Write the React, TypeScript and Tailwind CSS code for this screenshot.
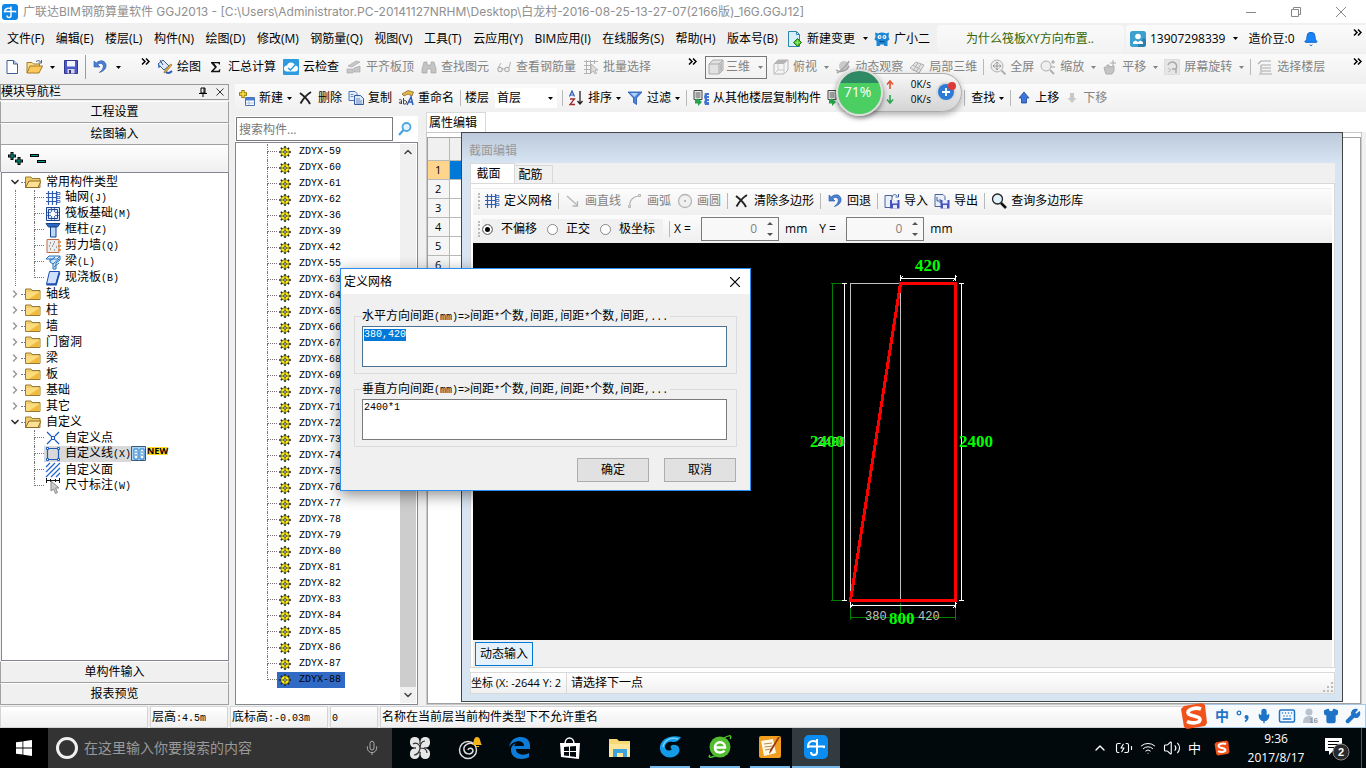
import React, { useEffect, useRef } from 'react';
import { BatteryCharging, Bell, ChevronDown, ChevronRight, ChevronUp, Keyboard, Mic, Shirt, Volume2, Wifi, Wrench } from 'lucide-react';

type IconProps = { children: React.ReactNode; className?: string; box?: string };

const Icon: React.FC<IconProps> = ({ children, className = 'h-4 w-4', box = '0 0 16 16' }) => (
  <svg viewBox={box} className={`${className} shrink-0`} fill="none" aria-hidden="true">
    {children}
  </svg>
);

const icons: Record<string, React.ReactNode> = {
  file: (
    <Icon>
      <path d="M3 1.5h6.5L13.5 5v9.5H3z" fill="#fff" stroke="#3d5f96" />
      <path d="M9.5 1.5V5h4" fill="#b9cdec" stroke="#3d5f96" />
    </Icon>
  ),
  open: (
    <Icon className="h-4 w-[18px]" box="0 0 18 16">
      <path d="M1 14V3.5h5L7.5 5h6v3" fill="#f7df8d" stroke="#a77b26" />
      <path d="M1 14l3-7h12.5L13 14z" fill="#fbc95a" stroke="#a77b26" />
      <path d="M10 2.5c2-1.5 4-1 5 1M15.5 1v3h-3" stroke="#4a6384" />
    </Icon>
  ),
  save: (
    <Icon>
      <path d="M1.5 1.5h13v13h-13z" fill="#4e59c9" stroke="#30368f" />
      <path d="M4 2h8v5.5H4z" fill="#f2f5ff" />
      <path d="M4.5 10h7v4.5h-7z" fill="#d5d8e2" />
      <path d="M6 11h2v3.5H6z" fill="#30368f" />
    </Icon>
  ),
  undo: (
    <Icon>
      <path d="M2 2v6h6L5.8 5.8C8 3.6 11 4.2 11.3 7c.2 2.5-1.5 4.7-4 6.5 4-1 6.8-3.5 6.8-7C14 1.6 8 .2 4.2 4z" fill="#4a7fd6" stroke="#2a55a6" strokeWidth=".6" />
    </Icon>
  ),
  paint: (
    <Icon>
      <path d="M1 5l5-4 6 6-5 4z" fill="#dfe9f7" stroke="#345a92" />
      <path d="M3 1l3 5" stroke="#345a92" />
      <path d="M1.5 5.5C.5 7 1 9 2 9s1-2 1-3" fill="#3f74c7" />
      <path d="M15 6l-6 7-2 1 .5-2L13.5 5z" fill="#e3ae3e" stroke="#8a6214" strokeWidth=".6" />
      <path d="M9 13c2 2 4 1 6-1" stroke="#2c5fb8" strokeWidth="2" />
    </Icon>
  ),
  sigma: (
    <Icon>
      <path d="M3 3h9v2.5h-1c-.3-1-.8-1.2-2-1.2H6L9 8l-3.5 3.8h3.7c1.3 0 1.8-.4 2.2-1.5h1l-.5 3H3v-1L6.8 8.2 3 4z" fill="#111" />
    </Icon>
  ),
  cloud: (
    <Icon>
      <rect width="16" height="16" rx="1" fill="#2d9be0" />
      <path d="M4 12.5a3 3 0 010-6 4.2 4.2 0 018 0 3 3 0 010 6z" fill="#fff" />
      <path d="M5 9l2.5 2L12 6" stroke="#2d9be0" strokeWidth="1.5" />
    </Icon>
  ),
  slab: (
    <Icon>
      <path d="M2 7l8-5 4 1-8 5zM1 10h6v4H1zM8 9l6-2v6H8z" fill="#c6c6c6" stroke="#aaa" strokeWidth=".7" />
    </Icon>
  ),
  binoculars: (
    <Icon>
      <path d="M3 3h3v3h4V3h3l2 7v4h-5v-4H6v4H1v-4z" fill="#c4c4c4" stroke="#a5a5a5" strokeWidth=".7" />
    </Icon>
  ),
  glasses: (
    <Icon>
      <circle cx="4" cy="10.5" r="2.2" stroke="#b0b0b0" strokeWidth="1.2" />
      <circle cx="11" cy="10.5" r="2.2" stroke="#b0b0b0" strokeWidth="1.2" />
      <path d="M6 10h3M2 9l3-5M13 9l1.5-6" stroke="#b0b0b0" />
    </Icon>
  ),
  batch: (
    <Icon>
      <path d="M1 2.5h14M1 6.5h9M1 10.5h7M1 14.5h7M3.5 1v14M7.5 1v14M11.5 1v4" stroke="#b2b2b2" />
      <path d="M8 5l7 6-3 .3 1.5 3-1.5.7-1.5-3L8 14z" fill="#ddd" stroke="#aaa" strokeWidth=".8" />
    </Icon>
  ),
  cube: (
    <Icon>
      <path d="M1 5l4-4h10v10l-4 4H1z" fill="#e2e2e2" stroke="#aaa" />
      <path d="M1 5h10v10M11 5l4-4" stroke="#aaa" />
      <path d="M11.5 5.500l3-3v8l-3 3z" fill="#bbb" />
    </Icon>
  ),
  cubeTop: (
    <Icon>
      <path d="M1 5l4-4h10v10l-4 4H1z" fill="#f5f5f5" stroke="#b5b5b5" />
      <path d="M1 5l4-4h10l-4 4z" fill="#b5b5b5" />
      <path d="M11 5v10M5 5v6h6M5 11l-4 4" stroke="#c8c8c8" />
    </Icon>
  ),
  orbit: (
    <Icon>
      <circle cx="9" cy="7" r="5" fill="#c9c9c9" />
      <path d="M2 14c2-1 10-7 12-12M1 11c4 3 11 1 13-4" stroke="#a2a2a2" strokeWidth="1.5" />
    </Icon>
  ),
  part3d: (
    <Icon>
      <path d="M1 9l6-6 8 3-5 8z" fill="#e4e4e4" stroke="#b0b0b0" />
      <path d="M4 6l8 5M9 4l-5 8M12 5l-5 8" stroke="#b0b0b0" />
    </Icon>
  ),
  full: (
    <Icon>
      <circle cx="7" cy="7" r="6" fill="#eee" stroke="#b0b0b0" />
      <path d="M7 3v8M3 7h8M5.5 4.5L7 3l1.5 1.5M5.5 9.5L7 11l1.5-1.5M4.5 5.5L3 7l1.5 1.5M9.5 5.5L11 7 9.5 8.5" stroke="#999" />
      <path d="M11.5 11.5l4 4" stroke="#b0b0b0" strokeWidth="2" />
    </Icon>
  ),
  zoom: (
    <Icon>
      <circle cx="6" cy="7" r="5" fill="#eee" stroke="#b0b0b0" />
      <path d="M10 11l4 4" stroke="#b0b0b0" strokeWidth="2" />
      <path d="M13 1v4M11 3h4M11 8h4" stroke="#a0a0a0" />
    </Icon>
  ),
  pan: (
    <Icon>
      <path d="M2 9c1-2 2-1 3 0V6h2v2l5-1v5l-2 3H4z" fill="#c4c4c4" stroke="#aeaeae" />
      <path d="M11 1v6M8 4h6" stroke="#aaa" />
    </Icon>
  ),
  rotate: (
    <Icon>
      <path d="M.5.5h15v15H.5z" fill="#e6e6e6" stroke="#ddd" />
      <path d="M4 6a4.5 4.5 0 118 4M12 14v-4H8" stroke="#a8a8a8" strokeWidth="1.5" />
      <path d="M4 9l3 2-3 2" stroke="#bbb" />
    </Icon>
  ),
  floors: (
    <Icon>
      <path d="M1 5l3-3h10M4 6h10M5 9h9M5 12h9M2 15h13M4 6v8" stroke="#aaa" strokeWidth="1.2" />
    </Icon>
  ),
  create: (
    <Icon>
      <path d="M4 0v8M0 4h8" stroke="#9b7a00" strokeWidth="3.4" />
      <path d="M4 1v6M1 4h6" stroke="#ffe04a" strokeWidth="1.6" />
      <path d="M6.5 7.5h9v8h-9z" fill="#fff" stroke="#4b72b5" />
      <path d="M7 8h8v2.5H7z" fill="#4b7fd1" />
      <path d="M7 13h8M10 10v5" stroke="#a9bfe2" />
    </Icon>
  ),
  cross: (
    <Icon>
      <path d="M2 3c4 3 8 7 10 11M13 2C8 5 5 9 2.5 13.5" stroke="#222" strokeWidth="1.9" />
    </Icon>
  ),
  copy: (
    <Icon>
      <path d="M1 1.5h6l2 2v7H1z" fill="#e7effb" stroke="#4b72b5" />
      <path d="M6.5 5.5h6l3 3v6h-9z" fill="#dbe7f9" stroke="#35599c" />
      <path d="M8 9h4M8 11h6M8 13h6M2.5 4.5h3M2.5 6.5h3" stroke="#4b72b5" strokeWidth=".8" />
    </Icon>
  ),
  rename: (
    <Icon>
      <path d="M4 4l6-3.5L15.5 2 14 6l-4-2-4 2z" fill="#e3b54b" stroke="#80611e" strokeWidth=".7" />
      <path d="M9 15l4-8 2 8M10.5 12h4" stroke="#2c5fc0" strokeWidth="1.5" />
      <path d="M1 10c1-1 2.5-.5 2.5.5V14M3.5 12c-3-.5-3 2 0 1.5M5.5 8v6c2 .5 3-.5 3-2s-1.5-2-3-1" stroke="#333" strokeWidth=".9" />
    </Icon>
  ),
  sort: (
    <Icon>
      <path d="M1.5 6.5L4 1l2.5 5.5M2.5 5h3" stroke="#2c57b0" strokeWidth="1.2" />
      <path d="M2 9h4.500L2 14.5h5" stroke="#a12a2a" strokeWidth="1.3" />
      <path d="M12 1v12M9.5 11l2.5 3 2.5-3" stroke="#222" strokeWidth="1.3" />
    </Icon>
  ),
  filter: (
    <Icon>
      <path d="M1 2h14L9.5 8v6.5l-3-2V8z" fill="#4a86e0" stroke="#1f54ab" strokeWidth=".8" />
      <path d="M3.5 3H11L7.5 7z" fill="#b4d2fb" />
    </Icon>
  ),
  floorCopy: (
    <Icon>
      <path d="M1 .5h8v9H1z" fill="#e9e9e9" stroke="#444" />
      <path d="M2.500 3h5M2.500 5h5M2.500 7h5" stroke="#555" />
      <path d="M12 3h4v2h-2v1h2v2h-2v1h2v2h-2v1h2v3h-4l-1-3 1-2-1-3z" fill="#3f74d0" />
      <path d="M2 9.5v4h3V16l4-4-4-3.500z" fill="#28a248" />
    </Icon>
  ),
  up: (
    <Icon className="h-4 w-[14px]" box="0 0 14 16">
      <path d="M7 2l5 6H9.5v5h-5V8H2z" fill="#3f74dd" stroke="#204a9e" strokeWidth=".8" />
    </Icon>
  ),
  down: (
    <Icon className="h-4 w-[14px]" box="0 0 14 16">
      <path d="M7 13l4.5-5H9V3H5v5H2.500z" fill="#c8c8c8" />
    </Icon>
  ),
  change: (
    <Icon>
      <path d="M1.5.5h8l3 3v12h-11z" fill="#d7effa" stroke="#2f86a8" />
      <path d="M9.5.5v3h3" stroke="#2f86a8" />
      <path d="M10.5 7.5l4 4-4 4-4-4z" fill="#3fae20" stroke="#1f7d0e" />
      <path d="M10.5 9v5M8 11.5h5" stroke="#8ae665" strokeWidth="1.4" />
    </Icon>
  ),
  mascot: (
    <Icon>
      <path d="M1 1.5l3 1c2.500-1.500 5.500-1.500 8 0l3-1-.5 4 1 3-2 1.500V15h-3l-1-1.500h-3L5.500 15h-3v-5L.5 8.500l1-3z" fill="#1b86d8" />
      <circle cx="5.5" cy="6" r="2" fill="#fff" />
      <circle cx="10.5" cy="6" r="2" fill="#fff" />
      <path d="M5 6h1.500M9.500 6H11M5.500 10c2 1.200 3 1.200 5 0" stroke="#134b80" strokeWidth="1.2" />
    </Icon>
  ),
  user: (
    <Icon>
      <rect width="16" height="16" rx="2.5" fill="#3b9fd0" />
      <path d="M8 12l6-5 2 2v5l-2 2H8z" fill="#2780b0" />
      <circle cx="8" cy="5.5" r="2.8" fill="#fff" />
      <path d="M3 13v-2l2.500-1.500L8 11l2.500-1.500L13 11v2z" fill="#fff" />
    </Icon>
  ),
  grid: (
    <Icon>
      <path d="M1 3.5h11M1 7.5h11M1 11.5h11M3.5 1v14M7.5 1v14M11.5 1v14" stroke="#2f5cb5" strokeWidth="1.2" />
      <path d="M12 2.5h3v2h-3zM12 6.5h3v2h-3zM12 10.5h3v2h-3z" stroke="#2f5cb5" strokeWidth=".8" />
    </Icon>
  ),
  raft: (
    <Icon>
      <path d="M1.5 1.5h13v13h-13z" fill="#dfeafc" stroke="#1d4592" />
      <path d="M3.5 3.5h9v9h-9z" stroke="#1d4592" />
      <path d="M6.5 1v14M9.5 1v14M1 6.5h14M1 9.5h14" stroke="#1d4592" strokeWidth=".7" />
      <path d="M6 6h4v4H6z" fill="#fff" />
    </Icon>
  ),
  column: (
    <Icon>
      <path d="M1 1.5h14L12.5 5h-9z" fill="#2b69c4" stroke="#174487" />
      <path d="M5.5 5H11v10H5.5z" fill="#bdd6fb" stroke="#174487" />
    </Icon>
  ),
  wall: (
    <Icon>
      <path d="M2 1.5h12v13H2z" fill="#ededed" stroke="#bd6f4d" />
      <path d="M5 5h1M9 4h1M7 8h1M11 9h1M5 11h1M9 12h1M8 6h1M4 8h1" stroke="#555" />
      <path d="M13 4h3M13 8h3M13 12h3" stroke="#d88432" strokeWidth="1.5" />
    </Icon>
  ),
  beam: (
    <Icon>
      <path d="M1 5l3-3h11l-3 3zM5 5v3l3 2v5h3V9l4-3V2" fill="#cfe6fb" stroke="#2572bd" />
      <path d="M5 7l5-4M8 10l6-5M9 13l5-4" stroke="#2572bd" />
    </Icon>
  ),
  floor: (
    <Icon>
      <path d="M4.5 1.5h10L11 14H1.5z" fill="#cfe0ff" stroke="#1d4fae" />
      <path d="M1.5 14.5H11l3.5-12" stroke="#1d4fae" strokeWidth="1.8" />
    </Icon>
  ),
  point: (
    <Icon>
      <path d="M2 2l4 4M14 2l-4 4M2 14l4-4M14 14l-4-4" stroke="#1d5bbd" strokeWidth="1.2" />
      <path d="M6.5 6.5h3v3h-3z" stroke="#1d5bbd" strokeWidth="1.2" />
    </Icon>
  ),
  line: (
    <Icon>
      <path d="M2.5 2.5h11v11h-11z" stroke="#1d5bbd" strokeWidth="1.2" />
      <path d="M1.5 1.5h2v2h-2zM12.5 1.5h2v2h-2zM1.5 12.5h2v2h-2zM12.5 12.5h2v2h-2z" fill="#fff" stroke="#1d5bbd" />
    </Icon>
  ),
  area: (
    <Icon>
      <path d="M1 5l4-4M1 10l9-9M1 15L15 1M6 15l9-9M11 15l4-4" stroke="#2464cc" strokeWidth="1.2" />
    </Icon>
  ),
  dimension: (
    <Icon>
      <path d="M1.5 0v5M14.5 0v5M1 2.5h14M5.5 1v3M10.5 1v3" stroke="#111" />
      <path d="M6 3l8 7h-3.500l2 4.500-2 1-2-4.500L6 13z" fill="#ccc" stroke="#888" />
    </Icon>
  ),
  drawLine: (
    <Icon>
      <path d="M2 3l10 9M12.5 8v5h-5" stroke="#b5b5b5" strokeWidth="1.3" />
    </Icon>
  ),
  arc: (
    <Icon>
      <path d="M3 13C2 7 7 3 12 3" stroke="#b5b5b5" strokeWidth="1.2" />
      <path d="M1.5 12.5h2v2h-2zM11.5 1.5h2v2h-2z" fill="#eee" stroke="#b5b5b5" />
    </Icon>
  ),
  circle: (
    <Icon>
      <circle cx="8" cy="8" r="6.5" fill="#f0f0f0" stroke="#b5b5b5" strokeWidth="1.3" />
      <circle cx="8" cy="8" r="1" fill="#a5a5a5" />
    </Icon>
  ),
  importIcon: (
    <Icon>
      <path d="M1 2.5h7v12H1z" fill="#e9effb" stroke="#4d6596" />
      <path d="M6 7h9.5v8.5H6z" fill="#4652b8" />
      <path d="M8 7h5.5v3.5H8zM9 12h4v3.5H9z" fill="#e6e9ff" />
      <path d="M8 4c1-3 4-3 5-1M14.5 1v3h-3" stroke="#3a5b9e" />
    </Icon>
  ),
  exportIcon: (
    <Icon>
      <path d="M1 1.5h8l2 2v10H1z" fill="#e9effb" stroke="#4d6596" />
      <path d="M3 4v4h4M5.5 6l2 2-2 2" stroke="#3a5b9e" />
      <path d="M6.5 7h9v8.5h-9z" fill="#4652b8" />
      <path d="M8.5 7h5v3.5h-5zM9 12h4v3.5H9z" fill="#e6e9ff" />
    </Icon>
  ),
  search: (
    <Icon>
      <circle cx="6.5" cy="6" r="5" fill="#dff2fb" stroke="#222" strokeWidth="1.3" />
      <path d="M10 10l5 5" stroke="#111" strokeWidth="2.6" />
    </Icon>
  ),
};

const Folder = ({ open = false }) => (
  <Icon>
    <path d="M.5 13.5V3H6l1 1.5h8v9z" fill="#f0cd68" stroke="#9b7a34" />
    {open ? (
      <path d="M.5 13.5L4 7h12l-3 6.5z" fill="#fce093" stroke="#8c6a22" />
    ) : (
      <>
        <path d="M1 6h13.5v7H1z" fill="#fbdc7c" />
        <path d="M14.5 6v7H4z" fill="#eebb3d" />
      </>
    )}
  </Icon>
);

const Gear = () => (
  <Icon className="h-3 w-3" box="0 0 12 12">
    <path d="M6 0v12M0 6h12M1.8 1.8l8.4 8.4M10.2 1.8l-8.4 8.4" stroke="#222" strokeWidth="1.6" />
    <circle cx="6" cy="6" r="4.2" fill="#fff21c" stroke="#3a3800" strokeWidth=".7" />
    <path d="M6 2.5v7M2.5 6h7" stroke="#4c4a00" strokeWidth=".8" />
    <circle cx="6" cy="6" r="1.3" fill="#fff" stroke="#222" strokeWidth=".8" />
  </Icon>
);

const Caret = () => (
  <svg viewBox="0 0 5 3" className="h-[3px] w-[5px] shrink-0" aria-hidden="true">
    <path d="M0 0h5L2.5 3z" fill="currentColor" />
  </svg>
);

const More = () => (
  <svg viewBox="0 0 9 7" className="h-[7px] w-[9px] shrink-0" fill="none" aria-hidden="true">
    <path d="M1 .5l3 3-3 3M5 .5l3 3-3 3" stroke="#000" strokeWidth="1.5" />
  </svg>
);

const Sep = () => <span className="h-4 w-px shrink-0 bg-[#b8b8b8]" />;

// Bitmap style label: latin characters take half the width of a chinese one
const Song: React.FC<{ text: string }> = ({ text }) => (
  <span className="whitespace-pre">
    {text.split(/([\x20-\x7e]+)/).map((part, i) =>
      i % 2 ? (
        <span key={i} className="font-['Liberation_Mono',monospace] text-[10px]">{part}</span>
      ) : (
        part
      )
    )}
  </span>
);

type ToolProps = { icon?: string; label: string; off?: boolean; drop?: boolean };

const Tool: React.FC<ToolProps> = ({ icon, label, off, drop }) => (
  <button className={`flex shrink-0 items-center gap-1 whitespace-nowrap ${off ? 'text-[#838383]' : 'text-black'}`}>
    {icon && icons[icon]}
    <span className={off && drop ? 'mr-[3px]' : ''}>{label}</span>
    {drop && <Caret />}
  </button>
);

const menus = [
  '文件(F)', '编辑(E)', '楼层(L)', '构件(N)', '绘图(D)', '修改(M)', '钢筋量(Q)', '视图(V)',
  '工具(T)', '云应用(Y)', 'BIM应用(I)', '在线服务(S)', '帮助(H)', '版本号(B)',
];

const TitleBar = () => (
  <header className="flex h-[23px] shrink-0 items-center bg-white pl-0.5 text-[#8f8f8f]">
    <Icon>
      <rect width="16" height="16" rx="3" fill="#0f86e6" />
      <path d="M9 2.5v9a2 2 0 01-4 0M2.5 8.5v-1h11v1M9 4.500c-3-1-6 0-6.500 3" stroke="#fff" strokeWidth="1.4" />
    </Icon>
    <h1 className="ml-[5px] flex-1 truncate font-['Inter','Noto_Sans_CJK_SC',sans-serif]">
      广联达BIM钢筋算量软件 GGJ2013 - [C:\Users\Administrator.PC-20141127NRHM\Desktop\白龙村-2016-08-25-13-27-07(2166版)_16G.GGJ12]
    </h1>
    <div className="flex gap-[35px] pr-5">
      <button aria-label="最小化">
        <Icon className="h-2.5 w-2.5" box="0 0 10 10"><path d="M0 5.5h10" stroke="#888" /></Icon>
      </button>
      <button aria-label="还原">
        <Icon className="h-2.5 w-2.5" box="0 0 10 10"><path d="M.5 2.5h7v7h-7zM2.5 2V.5h7v7H8" stroke="#888" /></Icon>
      </button>
      <button aria-label="关闭">
        <Icon className="h-2.5 w-2.5" box="0 0 10 10"><path d="M0 0l10 10M10 0L0 10" stroke="#888" /></Icon>
      </button>
    </div>
  </header>
);

const MenuBar = () => (
  <nav className="flex h-[31px] shrink-0 items-center bg-[#f0f0f0]">
    <div className="flex w-[778px] shrink-0 items-center justify-between pl-[7px]">
      {menus.map((m) => (
        <button key={m} className="whitespace-nowrap">{m}</button>
      ))}
    </div>
    <div className="ml-[9px] flex shrink-0 items-center gap-1.5">
      <button className="flex items-center gap-1">
        {icons.change}
        <span className="mr-1">新建变更</span>
        <Caret />
      </button>
      <button className="flex items-center gap-1">{icons.mascot}广小二</button>
    </div>
    <a href="#tips" className="ml-auto flex h-[27px] w-[187px] items-center rounded bg-gradient-to-b from-[#f9f9f9] to-[#f3f3f3] pl-[29px] text-[#336600]">
      为什么筏板XY方向布置..
    </a>
    <div className="ml-0.5 flex h-[27px] w-60 items-center rounded-l bg-gradient-to-b from-[#fbfbfb] to-[#f2f2f2] pl-1">
      <button className="flex items-center gap-1">
        {icons.user}
        <span className="mr-1">13907298339</span>
        <Caret />
      </button>
      <span className="ml-2.5">造价豆:0</span>
      <Bell className="ml-2 h-4 w-4 fill-[#1684f8] text-[#1668c8]" strokeWidth={1.5} />
      <span className="mr-1 ml-auto mb-3"><More /></span>
    </div>
  </nav>
);

const MainToolbar = () => (
  <div className="flex h-[30px] shrink-0 items-center bg-gradient-to-b from-[#fafafa] to-[#efefef] pb-1">
    <div className="flex w-[153px] shrink-0 items-center gap-1.5 pl-1">
      <button aria-label="新建">{icons.file}</button>
      <button aria-label="打开" className="flex items-center gap-1.5">{icons.open}<Caret /></button>
      <button aria-label="保存" className="ml-0.5">{icons.save}</button>
      <span className="h-6 w-px bg-[#9c9c9c]" />
      <button aria-label="撤销" className="flex items-center gap-2">{icons.undo}<Caret /></button>
      <span className="mb-3 ml-3.5"><More /></span>
    </div>
    <div className="flex shrink-0 items-center gap-[7px] pl-1">
      <Tool icon="paint" label="绘图" />
      <Tool icon="sigma" label="汇总计算" />
      <Tool icon="cloud" label="云检查" />
      <Tool icon="slab" label="平齐板顶" off />
      <Tool icon="binoculars" label="查找图元" off />
      <Tool icon="glasses" label="查看钢筋量" off />
      <Tool icon="batch" label="批量选择" off />
      <span className="mb-3 ml-[30px]"><More /></span>
    </div>
    <div className="flex flex-1 items-center gap-1.5 pl-2">
      <button className="flex h-[23px] w-[62px] shrink-0 items-center gap-0.5 border border-[#777] pl-0.5 text-[#838383]">
        {icons.cube}
        <span className="mr-1.5">三维</span>
        <Caret />
      </button>
      <Tool icon="cubeTop" label="俯视" off drop />
      <Tool icon="orbit" label="动态观察" off />
      <Tool icon="part3d" label="局部三维" off />
      <Sep />
      <Tool icon="full" label="全屏" off />
      <Tool icon="zoom" label="缩放" off drop />
      <Tool icon="pan" label="平移" off drop />
      <Tool icon="rotate" label="屏幕旋转" off drop />
      <Sep />
      <Tool icon="floors" label="选择楼层" off />
      <span className="mr-1 mb-3 ml-auto"><More /></span>
    </div>
  </div>
);

const ComponentToolbar = () => (
  <div className="flex h-7 shrink-0 items-center gap-1.5 bg-gradient-to-b from-[#fbfbfb] to-[#f0f0f0] pl-1">
    <Tool icon="create" label="新建" drop />
    <Tool icon="cross" label="删除" />
    <Tool icon="copy" label="复制" />
    <Tool icon="rename" label="重命名" />
    <Sep />
    <label className="-ml-0.5 flex shrink-0 items-center gap-1.5">
      楼层
      <span className="relative flex w-[62px] items-center bg-white">
        <select className="h-5 w-full appearance-none pl-0.5">
          <option>首层</option>
        </select>
        <span className="pointer-events-none absolute right-1"><Caret /></span>
      </span>
    </label>
    <span className="-mx-px flex"><Sep /></span>
    <Tool icon="sort" label="排序" drop />
    <Tool icon="filter" label="过滤" drop />
    <Sep />
    <Tool icon="floorCopy" label="从其他楼层复制构件" />
    <button aria-label="复制构件到其他楼层" className="w-[131px] shrink-0">{icons.floorCopy}</button>
    <Sep />
    <Tool label="查找" drop />
    <Sep />
    <Tool icon="up" label="上移" />
    <Tool icon="down" label="下移" off />
  </div>
);

const groups = [
  {
    name: '常用构件类型',
    items: [
      ['grid', '轴网(J)'], ['raft', '筏板基础(M)'], ['column', '框柱(Z)'],
      ['wall', '剪力墙(Q)'], ['beam', '梁(L)'], ['floor', '现浇板(B)'],
    ],
  },
  { name: '轴线' }, { name: '柱' }, { name: '墙' }, { name: '门窗洞' },
  { name: '梁' }, { name: '板' }, { name: '基础' }, { name: '其它' },
  {
    name: '自定义',
    items: [['point', '自定义点'], ['line', '自定义线(X)'], ['area', '自定义面'], ['dimension', '尺寸标注(W)']],
  },
];

const Elbow = ({ last = false }) => (
  <span className="flex h-4 w-2.5 shrink-0 flex-col">
    <span className="h-2 border-b border-l border-dotted border-[#777]" />
    {!last && <span className="h-2 border-l border-dotted border-[#777]" />}
  </span>
);

const NavButton: React.FC<{ label: string }> = ({ label }) => (
  <button className="h-[22px] shrink-0 border border-t-white border-r-[#a0a0a0] border-b-[#a0a0a0] border-l-[#a0a0a0] bg-[#f0f0f0]">
    {label}
  </button>
);

const Navigator = () => (
  <aside className="flex w-[229px] shrink-0 flex-col pb-px">
    <div className="mb-px flex h-4 shrink-0 items-center border border-[#999] bg-[#f0f0f0]">
      <h2 className="flex-1">模块导航栏</h2>
      <Icon className="mr-2 h-2.5 w-2.5" box="0 0 10 10">
        <path d="M3 1h4v5H3zM6 1v5M1 6.5h8M5 6v4" stroke="#000" />
      </Icon>
      <Icon className="mr-1 h-2 w-2" box="0 0 8 8"><path d="M.5.5l7 7M7.5.5l-7 7" stroke="#333" /></Icon>
    </div>
    <NavButton label="工程设置" />
    <NavButton label="绘图输入" />
    <div className="flex h-[27px] shrink-0 items-center border-x border-[#a0a0a0] bg-gradient-to-b from-white to-[#efefef] pl-1.5">
      <Icon className="h-4 w-10" box="0 0 40 16">
        <path d="M5 1v8M1 5h8M12 6v8M8 10h8M23 4.5h9M30 10.5h9" stroke="#000" strokeWidth="3" />
        <path d="M5 2v6M2 5h6M12 7v6M9 10h6M24 4.5h7M31 10.5h7" stroke="#0a9b8f" />
      </Icon>
    </div>
    <ul className="ml-px flex-1 border border-[#828790] bg-white pt-px">
      {groups.map((g) => (
        <li key={g.name}>
          <div className="flex h-4 items-center pl-[7px]">
            {g.items ? <ChevronDown className="h-3 w-3 text-[#333]" strokeWidth={3.5} /> : <ChevronRight className="h-3 w-3 text-[#999]" strokeWidth={3} />}
            <span className="w-1 border-t border-dotted border-[#777]" />
            <Folder open={!!g.items} />
            <span className="ml-[5px]">{g.name}</span>
          </div>
          {g.items && (
            <ul>
              {g.items.map(([icon, label], i) => (
                <li key={label} className="flex h-4 items-center pl-[13px]">
                  <span className={`h-4 w-[19px] shrink-0 ${g.name === '自定义' ? '' : 'border-l border-dotted border-[#777]'}`} />
                  <Elbow last={i === g.items.length - 1} />
                  <span className={`flex h-4 items-center gap-1 pl-px ${icon === 'line' ? 'bg-[#d9d9d9]' : ''}`}>
                    {icons[icon]}
                    <Song text={label} />
                  </span>
                  {icon === 'line' && (
                    <>
                      <Icon>
                        <path d="M.5.5h14v14H.5z" fill="#a9d5f5" stroke="#3c5a78" />
                        <path d="M3 3h4v10H3zM9 3h4v10H9z" fill="#fff" stroke="#1c76c8" />
                        <path d="M4 6h2M4 9h2M10 6h2M10 9h2" stroke="#1c76c8" />
                      </Icon>
                      <b className="mb-1.5 h-2 bg-[#ffdc1e] text-[9px] leading-[8px]">NEW</b>
                    </>
                  )}
                </li>
              ))}
            </ul>
          )}
        </li>
      ))}
    </ul>
    <NavButton label="单构件输入" />
    <NavButton label="报表预览" />
  </aside>
);

const componentIds = [59, 60, 61, 62, 36, 39, 42, 55, ...Array.from({ length: 26 }, (_, i) => 63 + i)];

const ComponentList = () => (
  <section className="flex w-[183px] shrink-0 flex-col pt-1 pb-px">
    <div className="flex h-[26px] shrink-0 items-center bg-white pl-px">
      <input aria-label="搜索构件" placeholder="搜索构件..." className="h-6 w-[157px] border border-[#7a7a7a] px-0.5 placeholder:text-[#777]" />
      <Icon className="ml-1 h-4 w-4">
        <circle cx="9.5" cy="6" r="4" fill="#e3f3fd" stroke="#4fa7e0" strokeWidth="1.8" />
        <path d="M6.5 9L2 14" stroke="#4fa7e0" strokeWidth="2.4" />
      </Icon>
    </div>
    <div className="flex min-h-0 flex-1 border border-[#828790] bg-white p-px">
      <ul className="flex-1 overflow-hidden">
        {componentIds.map((id) => (
          <li key={id} className="flex h-4 items-center pl-[30px]">
            <Elbow last={id === 88} />
            <span className={`flex h-4 items-center gap-2 pr-1 pl-0.5 ${id === 88 ? 'bg-[#316ac5]' : ''}`}>
              <Gear />
              <span className="font-['Liberation_Mono',monospace] text-[10px]">ZDYX-{id}</span>
            </span>
          </li>
        ))}
      </ul>
      <div className="flex w-4 shrink-0 flex-col items-center bg-[#f0f0f0]">
        <ChevronUp className="h-4 w-3 text-[#444]" strokeWidth={3} />
        <span className="mt-auto h-[240px] w-full bg-[#cdcdcd]" />
        <ChevronDown className="h-4 w-3 text-[#444]" strokeWidth={3} />
      </div>
    </div>
  </section>
);

const SectionDrawing = () => (
  <svg viewBox="782 243 241 396" className="h-[396px] w-[241px]" fill="none" shapeRendering="crispEdges">
    <g stroke="#008000">
      <path d="M832.5 283v318M831 283.5h14M831 600.5h14" />
      <path d="M850 617.5h106M850.5 603v17M900.5 603v17M955.5 603v17" />
    </g>
    <path d="M850.5 600V283.5H900M900.5 290v310" stroke="#c0c0c0" />
    <g stroke="#fff">
      <path d="M844.5 283v318M842 283.5h5M842 600.5h5" />
      <path d="M961.5 283v318M959 283.5h5M959 600.5h5" />
      <path d="M900 278.5h56M900.5 275v6M955.5 275v6" />
      <path d="M850 605.5h106M850.5 602v6M955.5 602v6" />
      <path d="M900 280l3-4M953 281l4-5M850 608l3-4M953 608l4-5" />
    </g>
    <path d="M850.5 600.5l50-317h55v317z" stroke="#f00" strokeWidth="3" />
    <g fill="#c0c0c0" fontFamily="Liberation Mono, monospace" fontSize="12">
      <text x="865" y="620">380</text>
      <text x="918" y="620">420</text>
      <text x="817" y="446">2400</text>
    </g>
    <g fill="#0f0" fontFamily="Liberation Serif, serif" fontSize="17" fontWeight="bold">
      <text x="915" y="271">420</text>
      <text x="810" y="447">2400</text>
      <text x="959" y="447">2400</text>
      <text x="889" y="624">800</text>
    </g>
  </svg>
);

const Offset: React.FC<{ name: string }> = ({ name }) => (
  <label className="flex items-center gap-1.5">
    <span className="w-[21px] whitespace-nowrap">{name} =</span>
    <span className="flex h-6 w-[78px] items-center border border-[#7a7a7a] bg-[#f8f8f8] pr-1">
      <input defaultValue="0" className="w-full min-w-0 pr-2.5 text-right text-[#838383]" />
      <svg viewBox="0 0 7 16" className="h-4 w-[7px] shrink-0" aria-hidden="true">
        <path d="M0 4h6L3 1zM0 12h6l-3 3z" fill="#555" />
      </svg>
    </span>
    mm
  </label>
);

const Grip = () => <span className="h-4 shrink-0 border-l-2 border-dotted border-[#bbb]" />;

const SectionEditor = () => (
  <section className="absolute top-5 right-[23px] bottom-1 left-[35px] flex flex-col border border-[#444] bg-[#d7e4f2] pr-[7px] pb-[7px] pl-2">
    <h2 className="-mr-[7px] -ml-2 h-[30px] shrink-0 bg-gradient-to-b from-[#bccadb] to-[#d7e4f2] pt-2.5 pl-[7px] leading-4 text-[#999]">
      截面编辑
    </h2>
    <div className="flex h-5 shrink-0 items-end bg-[#f0f0f0]">
      <button className="h-5 w-[45px] border border-b-0 border-[#d9d9d9] bg-white pr-2">截面</button>
      <button className="h-[18px] w-[38px] border border-b-0 border-l-0 border-[#d9d9d9] bg-[#f0f0f0] pr-1.5">配筋</button>
    </div>
    <div className="flex min-h-0 flex-1 flex-col border border-[#d9d9d9] bg-white px-0.5 pt-1">
      <div className="flex h-[27px] shrink-0 items-center gap-1.5 border-t border-[#eee] bg-gradient-to-b from-[#fcfcfc] to-[#efefef] pb-0.5 pl-[5px]">
        <div className="flex items-center gap-1"><Grip /><Tool icon="grid" label="定义网格" /></div>
        <Sep />
        <Tool icon="drawLine" label="画直线" off />
        <Tool icon="arc" label="画弧" off />
        <Tool icon="circle" label="画圆" off />
        <Sep />
        <Tool icon="cross" label="清除多边形" />
        <Sep />
        <Tool icon="undo" label="回退" />
        <Sep />
        <Tool icon="importIcon" label="导入" />
        <Tool icon="exportIcon" label="导出" />
        <Sep />
        <Tool icon="search" label="查询多边形库" />
      </div>
      <div className="flex h-7 shrink-0 items-center bg-gradient-to-b from-[#fcfcfc] to-[#efefef] pl-[5px]">
        <Grip />
        <div className="ml-0.5 flex h-5 items-center gap-2.5 bg-[#f0f0f0] pr-2">
          {['不偏移', '正交', '极坐标'].map((m, i) => (
            <label key={m} className="flex items-center gap-2">
              <input
                type="radio"
                name="offset"
                defaultChecked={i === 0}
                className="m-0 h-[11px] w-[11px] appearance-none rounded-full border border-[#888] bg-white checked:bg-black checked:shadow-[inset_0_0_0_2px_#fff]"
              />
              {m}
            </label>
          ))}
        </div>
        <span className="mr-1 ml-1.5 flex"><Sep /></span>
        <Offset name="X" />
        <span className="w-3" />
        <Offset name="Y" />
      </div>
      <div className="flex min-h-0 flex-1 justify-center bg-black">
        <SectionDrawing />
      </div>
      <div className="h-[27px] shrink-0 bg-[#f0f0f0] pt-0.5 pl-0.5">
        <button className="h-6 w-[58px] border border-[#0078d7] bg-[#e5f1fb]">动态输入</button>
      </div>
    </div>
    <div className="h-1 shrink-0 bg-white" />
    <footer className="flex h-[22px] shrink-0 items-center border border-[#d9d9d9] bg-gradient-to-b from-white to-[#f0f0f0]">
      <span className="h-5 w-24 overflow-hidden border-r border-[#d9d9d9] text-[11px] leading-5 whitespace-nowrap">坐标 (X: -2644 Y: 2</span>
      <span className="flex-1 pl-1">请选择下一点</span>
      <Icon className="h-3 w-3 self-end" box="0 0 12 12">
        <path d="M9 1h2v2H9zM5 5h2v2H5zM9 5h2v2H9zM1 9h2v2H1zM5 9h2v2H5zM9 9h2v2H9z" fill="#bbb" />
      </Icon>
    </footer>
  </section>
);

const PropertyPanel = () => (
  <section className="relative ml-2 flex flex-1 flex-col pb-px">
    <div className="h-5 shrink-0 bg-white">
      <button className="h-5 w-[60px] border border-b-0 border-[#d9d9d9] bg-white pr-1.5">属性编辑</button>
    </div>
    <div className="mr-1 flex-1 border border-[#c8c8c8] bg-white pt-1">
      <div className="h-full border border-[#a0a0a0]">
        <table className="w-1/2 table-fixed border-collapse text-[11px]">
          <thead>
            <tr className="h-[22px] border-b border-[#b9b9b9] bg-[#f0f0f0]">
              <th className="w-[21px] border-r border-[#b9b9b9]" />
              <th />
            </tr>
          </thead>
          <tbody>
            {[1, 2, 3, 4, 5, 6].map((n) => (
              <tr key={n} className="h-[19px] border-b border-[#b9b9b9]">
                <th className={`border-r border-[#b9b9b9] leading-[18px] font-normal ${n === 1 ? 'bg-[#ffd58d]' : 'bg-[#f5f5f5]'}`}>{n}</th>
                <td className={n === 1 ? 'bg-[#0078d7]' : ''} />
              </tr>
            ))}
          </tbody>
        </table>
      </div>
    </div>
    <SectionEditor />
  </section>
);

const GridDialog = () => {
  const first = useRef<HTMLTextAreaElement>(null);

  useEffect(() => {
    first.current?.focus();
    first.current?.select();
  }, []);

  const fields = [
    { label: '水平方向间距(mm)=>间距*个数,间距,间距*个数,间距,...', value: '380,420', ref: first },
    { label: '垂直方向间距(mm)=>间距*个数,间距,间距*个数,间距,...', value: '2400*1', ref: undefined },
  ];

  return (
    <div role="dialog" aria-label="定义网格" className="absolute top-[268px] left-[340px] w-[411px] border border-[#2a8df0] bg-[#f0f0f0] shadow-[0_4px_14px_rgba(0,0,0,0.45)]">
      <div className="flex h-[25px] items-center justify-between bg-white pr-2.5 pl-[3px]">
        <h2>定义网格</h2>
        <button aria-label="关闭">
          <Icon className="h-2.5 w-2.5" box="0 0 10 10"><path d="M0 0l10 10M10 0L0 10" stroke="#000" strokeWidth="1.2" /></Icon>
        </button>
      </div>
      <div className="flex flex-col gap-[7px] px-[13px] pt-3.5 pb-2">
        {fields.map((f) => (
          <fieldset key={f.label} className="h-[66px] border border-[#dcdcdc] pr-[9px] pl-[7px]">
            <legend className="h-4 pr-0.5 leading-4"><Song text={f.label} /></legend>
            <textarea
              ref={f.ref}
              aria-label={f.label}
              defaultValue={f.value}
              className="mt-0.5 block h-[41px] w-full resize-none border border-[#7a7a7a] bg-white px-px pt-0.5 font-['Liberation_Mono',monospace] text-[10px] leading-3 outline-none selection:bg-[#0078d7] selection:text-white focus:border-[#4a7294]"
            />
          </fieldset>
        ))}
        <div className="flex justify-end gap-[15px] pt-1 pr-px">
          <button className="h-6 w-[72px] border border-[#adadad] bg-[#e1e1e1]">确定</button>
          <button className="h-6 w-[72px] border border-[#adadad] bg-[#e1e1e1]">取消</button>
        </div>
      </div>
    </div>
  );
};

const SpeedBall = () => (
  <div className="absolute top-[68px] left-[836px] flex h-12 w-[126px] items-center">
    <div className="z-10 flex h-[47px] w-[47px] shrink-0 items-center justify-center rounded-full border-2 border-[#ddd] bg-[linear-gradient(#2f8a63_0_28%,#4bcf63_28%_100%)] pr-1 text-sm text-white shadow-[0_2px_5px_rgba(0,0,0,0.5)]">
      71%
    </div>
    <div className="-ml-6 flex h-[39px] flex-1 items-center rounded-r-full border border-[#aaa] bg-gradient-to-b from-[#f7f7f7] to-[#d4d4d4] pr-1 pl-[26px] shadow-[0_3px_6px_rgba(0,0,0,0.3)]">
      <Icon className="h-7 w-2" box="0 0 8 28">
        <path d="M4 11V4M1 6.5L4 3l3 3.5" stroke="#e5502f" strokeWidth="1.6" />
        <path d="M4 17v7M1 21.5L4 25l3-3.5" stroke="#29a352" strokeWidth="1.6" />
      </Icon>
      <div className="ml-auto text-[10px] leading-[15px]">
        <div>0K/s</div>
        <div>0K/s</div>
      </div>
      <Icon className="ml-1 h-[22px] w-[22px]" box="0 0 22 22">
        <circle cx="11" cy="11" r="10" fill="#d9d9d9" />
        <circle cx="11" cy="11" r="8" fill="#2d7bd4" />
        <path d="M11 7v8M7 11h8" stroke="#fff" strokeWidth="1.8" />
        <circle cx="17" cy="5" r="4" fill="#dd3a36" />
      </Icon>
    </div>
  </div>
);

const StatusBar = () => (
  <footer className="flex h-[22px] shrink-0 gap-0.5 bg-[#f0f0f0] leading-5">
    {[
      ['w-[148px]', ''], ['w-[78px]', '层高:4.5m'], ['w-[98px]', '底标高:-0.03m'], ['w-12', '0'],
      ['flex-1', '名称在当前层当前构件类型下不允许重名'],
    ].map(([width, text]) => (
      <span key={width} className={`${width} border border-[#d4d4d4] bg-gradient-to-b from-white to-[#f0f0f0] pl-px`}>
        <Song text={text} />
      </span>
    ))}
  </footer>
);

const Sogou = ({ className = 'h-4 w-4' }) => (
  <Icon className={className} box="0 0 28 28">
    <path d="M4 4l18-3 3 2 2 18-2 3-18 3-3-2L1 7z" fill="#f0521b" />
    <path d="M21 7C16 5 8 7 8 10.500c0 4.500 12 2.500 12 7 0 4-9 4-13 2" stroke="#fff" strokeWidth="3.6" />
  </Icon>
);

const ImeBar = () => (
  <div className="absolute right-0 bottom-10 flex h-6 w-[186px] items-center text-[#1f74c8]">
    <div className="z-10"><Sogou className="h-7 w-7" /></div>
    <div className="-ml-3 flex h-6 flex-1 items-center justify-between border border-[#a9c8e4] bg-[#f6fafd] pr-1 pl-[18px]">
      <b className="text-sm leading-5">中</b>
      <Icon>
        <circle cx="4" cy="5" r="1.8" stroke="#1f74c8" strokeWidth="1.3" />
        <circle cx="11.5" cy="9" r="2" fill="#1f74c8" />
        <path d="M12.5 9c.5 2-.5 3.500-2.500 4.500" stroke="#1f74c8" strokeWidth="1.6" />
      </Icon>
      <Mic className="h-4 w-4 fill-[#1f74c8]" />
      <Keyboard className="h-[18px] w-[18px]" />
      <Icon>
        <circle cx="7" cy="4" r="3.5" fill="#b9c3d0" />
        <path d="M1 15c0-5 2-7 6-7s4 2 4 2v5z" fill="#b9c3d0" />
        <text x="7" y="15" fontSize="8" fontWeight="bold" fontFamily="Liberation Sans, sans-serif" fill="#8d99aa">16</text>
      </Icon>
      <Shirt className="h-4 w-4 fill-[#1f74c8]" />
      <Wrench className="h-4 w-4 fill-[#1f74c8]" />
    </div>
  </div>
);

const apps: { name: string; state: string; art: React.ReactNode }[] = [
  {
    name: '系统优化', state: '',
    art: (
      <>
        <g fill="#e6e6e6">
          <rect x="2" y="1" width="9.500" height="10.500" rx="4.500" />
          <rect x="12.500" y="1" width="9.500" height="10.500" rx="4.500" />
          <rect x="2" y="12.500" width="9.500" height="10.500" rx="4.500" />
          <rect x="12.500" y="12.500" width="9.500" height="10.500" rx="4.500" />
          <path d="M8 8h8v8H8z" />
        </g>
        <path d="M12 12c0-4-4-6-7-4M12 12c0-4 2-7 5-7M12 12c4 0 7 1 7 5M12 12c0 4-3 7-6 7" stroke="#333" strokeWidth="1.2" />
      </>
    ),
  },
  {
    name: '广联达提醒', state: '',
    art: (
      <>
        <circle cx="10" cy="14" r="8.5" stroke="#ddd" strokeWidth="1.5" />
        <path d="M16 8c-5-2-11 1-10 6 1 5 8 5 9 1 0-3-4-4-5-1" stroke="#ddd" strokeWidth="1.5" />
        <path d="M14 9c2-1 1-8 5-8s3 7 5 8zM18 10h3v1h-3z" fill="#f5b519" />
      </>
    ),
  },
  {
    name: 'Edge', state: '',
    art: <path d="M1 11C3 3 8 1 13 1c6 0 9 4 9 9v3H8c0 6 8 7 13 4v4c-7 4-18 2-18-7 0-4 3-6 5-7-1 1-2 3-2 3h10c0-7-11-6-15 1z" fill="#0c7cd8" />,
  },
  {
    name: '应用商店', state: '',
    art: (
      <>
        <path d="M2 7h20l-1 16-18-2z" fill="#fff" />
        <path d="M7 8c0-8 9-8 9 0" stroke="#fff" strokeWidth="1.5" />
        <path d="M6 11l5-.5V15H6zM12 10.5l6-.5v5h-6zM6 16h5v4l-5-.5zM12 16h6v5l-6-.8z" fill="#02090c" />
      </>
    ),
  },
  {
    name: '文件资源管理器', state: '',
    art: (
      <>
        <path d="M1 3h8l2 2h11v16H1z" fill="#f8d775" />
        <path d="M1 8h21v13H1z" fill="#ffe597" />
        <path d="M5 21v-8h14v8h-4v-4H9v4z" fill="#3ba4dc" />
      </>
    ),
  },
  {
    name: '浏览器', state: 'border-b-2 border-[#76b9ed]',
    art: (
      <>
        <path d="M23 2C13-1 1 4 2 14c1 9 13 11 18 5 3-4 1-9-3-9-4-1-6 3-3 4-3 3-7 1-7-2 0-4 4-6 8-5 3 0 6-1 8-5z" fill="#139be8" />
        <path d="M20 4C13 2 6 5 5 12" stroke="#6fd4ff" strokeWidth="1.5" />
      </>
    ),
  },
  {
    name: '安全浏览器', state: 'border-b-2 border-[#76b9ed]',
    art: (
      <>
        <circle cx="12" cy="12" r="10.5" fill="#52bd2e" />
        <path d="M2 20c-3 4 3 2 7 0M22 4c3-5-3-3-6-1" stroke="#52bd2e" strokeWidth="1.5" />
        <path d="M7 12.5h10c0-7-10-7-10 0 0 6 7 6 9.500 3" stroke="#fff" strokeWidth="2.5" />
      </>
    ),
  },
  {
    name: '记事本', state: 'border-b-2 border-[#76b9ed]',
    art: (
      <>
        <rect x="1" y="1" width="22" height="22" rx="2" fill="#f09d20" />
        <path d="M3 6l12-2 3 14-12 3z" fill="#fff8e4" />
        <path d="M6 9l8-1M6.5 12l8-1M7 15l6-1" stroke="#b98b4a" />
        <path d="M22 2l-9 15-2 2 1-4 8-13z" fill="#9a3c12" />
      </>
    ),
  },
  {
    name: '广联达BIM钢筋算量软件', state: 'border-b-2 border-[#76b9ed] bg-[#313b40]',
    art: (
      <>
        <rect width="24" height="24" rx="5" fill="#0a8cf0" />
        <path d="M13 4v13a3 3 0 01-6 0M4 13v-1.500h16V13M13 7C9 5 4 6 4 11.500" stroke="#fff" strokeWidth="2" />
      </>
    ),
  },
];

const Taskbar = () => (
  <footer className="flex h-10 shrink-0 items-center bg-[#02090c] text-white">
    <button aria-label="开始" className="flex h-10 w-12 items-center justify-center bg-black">
      <Icon><path d="M0 2.3l6.5-.9v6.2H0zM7.3 1.3L16 0v7.6H7.3zM0 8.400h6.500v6.200l-6.500-.9zM7.3 8.400H16V16l-8.700-1.200z" fill="#fff" /></Icon>
    </button>
    <div className="flex h-10 w-[344px] items-center bg-[#333] pr-3 pl-2">
      <span className="h-[22px] w-[22px] shrink-0 rounded-full border-3 border-[#f0f0f0]" />
      <input aria-label="搜索" placeholder="在这里输入你要搜索的内容" className="ml-1.5 flex-1 text-[14px] placeholder:text-[#999]" />
      <Mic className="h-4 w-4 text-[#aaa]" strokeWidth={1.5} />
    </div>
    <div className="flex flex-1 gap-2.5 pl-2">
      {apps.map((a) => (
        <button key={a.name} aria-label={a.name} className={`flex h-10 w-10 items-center justify-center last:-ml-2 last:w-12 ${a.state}`}>
          <Icon className="h-6 w-6" box="0 0 24 24">{a.art}</Icon>
        </button>
      ))}
    </div>
    <div className="flex items-center gap-[7px]">
      <ChevronUp className="h-4 w-4" />
      <BatteryCharging className="h-[18px] w-[18px]" strokeWidth={1.5} />
      <Wifi className="h-4 w-4" strokeWidth={1.5} />
      <Volume2 className="h-[18px] w-[18px]" strokeWidth={1.5} />
      <span className="text-[13px]">中</span>
      <span className="ml-1.5"><Sogou /></span>
    </div>
    <div className="ml-3 w-[68px] text-center leading-[19px]">
      <div>9:36</div>
      <div>2017/8/17</div>
    </div>
    <button aria-label="通知" className="ml-3.5 flex h-10 w-[38px] items-center border-r border-[#555]">
      <Icon className="h-7 w-7" box="0 0 28 28">
        <path d="M1 4h17v13H9l-4 4v-4H1z" fill="#fff" />
        <path d="M4 7.5h11M4 10.5h11M4 13.5h8" stroke="#000" strokeWidth="1.2" />
        <circle cx="17" cy="18" r="8" fill="#2a2a2a" stroke="#888" />
        <text x="14" y="22" fontSize="11" fontWeight="bold" fontFamily="Liberation Sans, sans-serif" fill="#fff">2</text>
      </Icon>
    </button>
    <span className="w-1" />
  </footer>
);

const App: React.FC = () => (
  <div className="relative flex h-screen w-full flex-col overflow-hidden bg-[#f0f0f0] font-['Open_Sans','Noto_Sans_CJK_SC',sans-serif] text-xs leading-4 text-black">
    <TitleBar />
    <MenuBar />
    <MainToolbar />
    <main className="flex min-h-0 flex-1">
      <Navigator />
      <div className="ml-1.5 flex min-w-0 flex-1 flex-col">
        <ComponentToolbar />
        <div className="flex min-h-0 flex-1">
          <ComponentList />
          <PropertyPanel />
        </div>
      </div>
    </main>
    <StatusBar />
    <Taskbar />
    <GridDialog />
    <SpeedBall />
    <ImeBar />
  </div>
);

export default App;
